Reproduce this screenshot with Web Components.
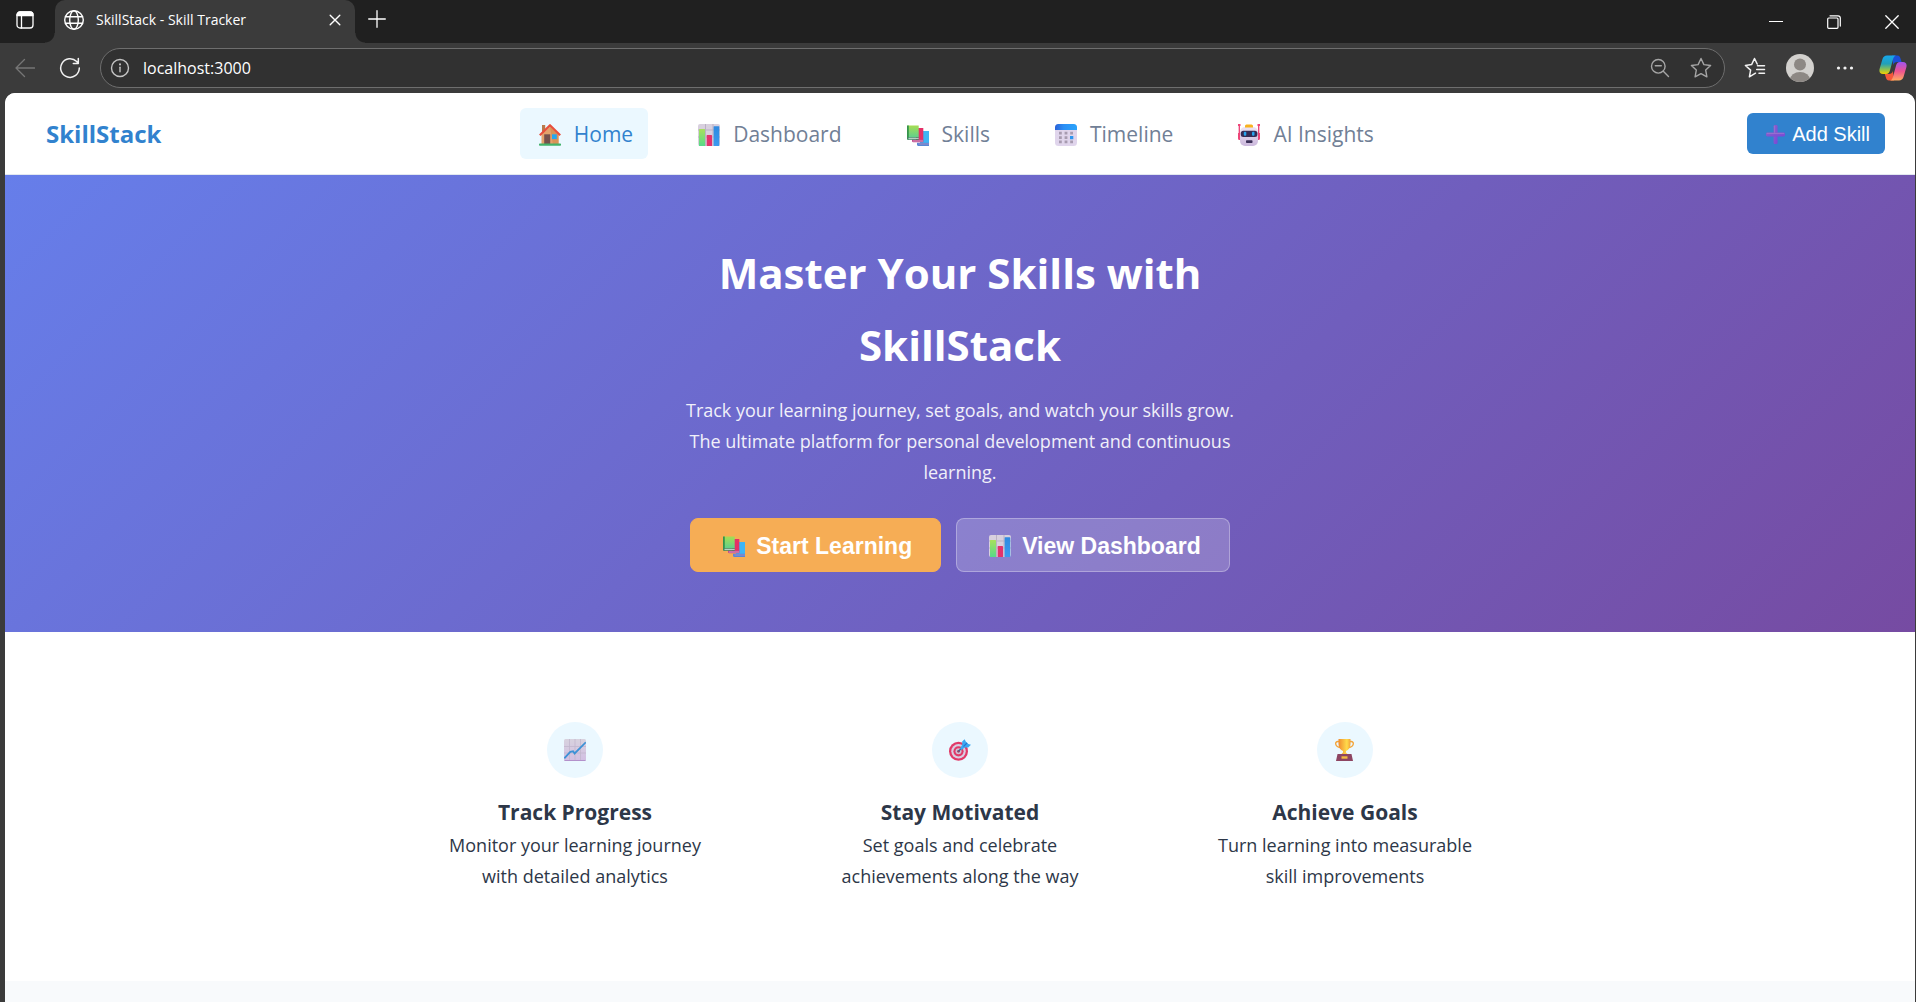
<!DOCTYPE html>
<html lang="en">
<head>
<meta charset="utf-8">
<title>SkillStack - Skill Tracker</title>
<style>
  body { margin: 0; background: #3b3b3b; font-family: "Open Sans", "Noto Sans", sans-serif; color: #2d3748; }
</style>
</head>
<body>
<browser-window>
  <skill-navbar></skill-navbar>
  <skill-hero>
    <span slot="title">Master Your Skills with SkillStack</span>
    <span slot="lead">Track your learning journey, set goals, and watch your skills grow. The ultimate platform for personal development and continuous learning.</span>
    <skill-button slot="actions" variant="warm" icon="books">Start Learning</skill-button>
    <skill-button slot="actions" variant="glass" icon="bars">View Dashboard</skill-button>
  </skill-hero>
  <feature-list>
    <feature-card icon="trend"><span slot="title">Track Progress</span>Monitor your learning journey with detailed analytics</feature-card>
    <feature-card icon="target"><span slot="title">Stay Motivated</span>Set goals and celebrate achievements along the way</feature-card>
    <feature-card icon="trophy"><span slot="title">Achieve Goals</span>Turn learning into measurable skill improvements</feature-card>
  </feature-list>
</browser-window>

<script>
const line = (w, h, body, sw = 1.4) =>
  `<svg width="${w}" height="${h}" viewBox="0 0 ${w} ${h}" fill="none" stroke="currentColor" stroke-width="${sw}" stroke-linecap="round" stroke-linejoin="round" aria-hidden="true">${body}</svg>`;
const art = (size, body) =>
  `<svg width="${size}" height="${size}" viewBox="0 0 22 22" aria-hidden="true">${body}</svg>`;

const ICONS = {
  tabs: () => line(20, 20, '<rect x="2" y="2" width="16" height="16" rx="3"/><path d="M2 5a3 3 0 0 1 3-3h10a3 3 0 0 1 3 3v.500H2z" fill="currentColor"/><path d="M6.500 6v12"/>', 1.3),
  globe: () => line(20, 20, '<circle cx="10" cy="10" r="9.300"/><ellipse cx="10" cy="10" rx="4.300" ry="9.300"/><path d="M1.500 6.700h17M1.500 13.300h17"/>'),
  close: () => line(12, 12, '<path d="M1.200 1.200l9.600 9.600M10.800 1.200l-9.600 9.600"/>', 1.4),
  plusThin: () => line(18, 18, '<path d="M9 .7v16.600M.7 9h16.600"/>', 1.3),
  min: () => line(14, 14, '<path d="M.5 6.500h13"/>', 1.2),
  restore: () => line(14, 14, '<rect x=".7" y="3" width="10.300" height="10.300" rx="1"/><path d="M3 .8h8a2.300 2.300 0 0 1 2.300 2.300v8"/>', 1.2),
  closeWin: () => line(14, 14, '<path d="M.8.800l12.400 12.400M13.200.800L.8 13.200"/>', 1.3),
  back: () => line(20, 20, '<path d="M19.500 10H1M9.500 1.500L1 10l8.500 8.500"/>', 1.3),
  refresh: () => line(22, 22, '<path d="M20.300 11a9.300 9.300 0 1 1-2.600-6.400l1.500 1.700M19.300 1.500v5h-5"/>', 1.5),
  info: () => line(20, 20, '<circle cx="10" cy="10" r="8.500"/><path d="M10 9.200v4.500"/><path d="M10 6.300v.1" stroke-width="2"/>'),
  zoomOut: () => line(20, 20, '<circle cx="8.300" cy="8.300" r="6.800"/><path d="M5.300 7.800h6M13.300 13.300l5.200 5.200"/>', 1.4),
  star: () => line(22, 22, '<path d="M11 1.500l2.900 6.100 6.700.9-4.900 4.600 1.200 6.700-5.900-3.200-5.900 3.200 1.200-6.700L1.400 8.500l6.700-.9z"/>', 1.4),
  favs: () => line(22, 22, '<path d="M11.500 16.200L5.400 19.800l1.200-6.700L1.400 8.500l6.200-.9L10.500 1.500l2.700 5.500M13.500 8.700h7M12.700 12.500h7.800M15 16.300h5.500"/>', 1.5),
  dots: () => '<svg width="18" height="6" viewBox="0 0 18 6" fill="currentColor" aria-hidden="true"><circle cx="2.500" cy="3" r="1.600"/><circle cx="9" cy="3" r="1.600"/><circle cx="15.500" cy="3" r="1.600"/></svg>',
  avatar: () => '<svg width="28" height="28" viewBox="0 0 28 28" aria-hidden="true"><defs><clipPath id="av"><circle cx="14" cy="14" r="14"/></clipPath></defs><circle cx="14" cy="14" r="14" fill="#d3d1ce"/><g clip-path="url(#av)" fill="#8d8884"><circle cx="14" cy="10.500" r="6"/><ellipse cx="14" cy="26" rx="10" ry="8"/></g></svg>',
  copilot: () => `<svg width="28" height="28" viewBox="0 0 28 28" aria-hidden="true"><defs>
    <linearGradient id="c1" x1="0" y1="0" x2="0" y2="1"><stop offset="0" stop-color="#16a8ee"/><stop offset=".45" stop-color="#22a0b8"/><stop offset=".75" stop-color="#8cc152"/><stop offset="1" stop-color="#f5d000"/></linearGradient>
    <linearGradient id="c2" x1="0" y1="0" x2="0" y2="1"><stop offset="0" stop-color="#a054f0"/><stop offset=".5" stop-color="#ee5390"/><stop offset="1" stop-color="#ffab60"/></linearGradient></defs>
    <path d="M13 1.500h5.500c1.800 0 2.600 1.500 3.100 3.200l1 3.300h-4.500c-2 0-3.200.7-3.900 3z" fill="#1b4fd8"/>
    <path d="M15 26.500H10c-2 0-2.700-1.500-3.200-3.200L5.800 20H10c2 0 3.200-.7 3.900-3z" fill="#f4583a"/>
    <path d="M8 1.500h9c-1.700.5-2.500 2-3 3.800l-3 11c-.6 2.300-1.700 3.700-4 3.700H4c-3 0-4.200-2.300-3.300-5.500L3.500 5C4.200 2.700 5.700 1.500 8 1.500z" fill="url(#c1)"/>
    <path d="M20 26.500h-9c1.700-.5 2.500-2 3-3.800l3-11c.6-2.300 1.700-3.700 4-3.700h3c3 0 4.200 2.300 3.300 5.500L24.500 23c-.7 2.300-2.200 3.500-4.500 3.500z" fill="url(#c2)"/></svg>`,

  plus: s => art(s, '<defs><linearGradient id="p" x1="0" x2="1" y1="0" y2="1"><stop offset="0" stop-color="#8a63c8"/><stop offset="1" stop-color="#7a45d8"/></linearGradient></defs><rect x="8.800" y="0" width="4.600" height="22" rx="1.500" fill="url(#p)"/><rect x="0" y="8.800" width="22" height="4.400" rx="1.500" fill="url(#p)"/><path d="M10 1v8M1 9.800h20" stroke="#a07ad0" stroke-width=".8"/>'),
  home: s => art(s, '<rect x="3" y="1" width="3.200" height="8" fill="#b97a4b"/><path d="M2.500 10.500L11 2.500l8.500 8V21h-17z" fill="#e3a26c"/><path d="M11 3l8.500 7.500V21H14z" fill="#d99357"/><rect x="5.200" y="10.300" width="6" height="10" fill="#75504c"/><rect x="13" y="10.300" width="4.800" height="4.800" fill="#25a7f0"/><path d="M.8 11.200L11 1.200l10.200 10" fill="none" stroke="#e84f3c" stroke-width="2.200" stroke-linejoin="round"/><rect x="0" y="19.600" width="22" height="2.200" rx=".8" fill="#43b36b"/>'),
  bars: s => art(s, '<defs><linearGradient id="g" x1="0" x2="0" y1="0" y2="1"><stop offset="0" stop-color="#a8e05c"/><stop offset="1" stop-color="#57d98a"/></linearGradient><linearGradient id="b" x1="0" x2="0" y1="0" y2="1"><stop offset="0" stop-color="#2f8ae0"/><stop offset="1" stop-color="#3b9af0"/></linearGradient></defs><rect width="22" height="22" rx="2" fill="#d8d0de"/><path d="M0 6h22M0 13h22M7.500 0v22M15 0v22" stroke="#bbb1c4" stroke-width="1"/><rect x="1" y="5" width="6" height="17" rx=".6" fill="url(#g)"/><rect x="8.700" y="11" width="5.300" height="11" rx=".6" fill="#e3326c"/><rect x="15.600" y="2.200" width="5.700" height="19.800" rx=".6" fill="url(#b)"/>'),
  books: s => art(s, '<defs><linearGradient id="k" x1="0" x2="0" y1="0" y2="1"><stop offset="0" stop-color="#a6dd52"/><stop offset="1" stop-color="#5fd08d"/></linearGradient></defs><path d="M13 7h9v13H13z" fill="#3fb5f4"/><path d="M10 18.800h12V22H11.500a1.500 1.500 0 0 1-1.500-1.500z" fill="#5787d6"/><path d="M11.500 20h10.500" stroke="#9d8bc4" stroke-width="1"/><path d="M9 4h7.300v12.500H9z" fill="#e52f67"/><path d="M5 15.500h11.300v2.800H6.300A1.500 1.500 0 0 1 5 17z" fill="#c04b8b"/><path d="M6 17h10" stroke="#dda6c8" stroke-width=".8"/><path d="M.4 1.500h11.300v12H.4z" fill="url(#k)"/><path d="M0 1.500h1.800v14H0z" fill="#35934c"/><path d="M.3 13.300h11.400v2.400H1A1 1 0 0 1 .3 15z" fill="#3e8564"/><path d="M1.500 14.400h10.200" stroke="#d6e2dc" stroke-width=".9"/>'),
  calendar: s => art(s, '<defs><linearGradient id="h" x1="0" x2="1" y1="0" y2="0"><stop offset="0" stop-color="#2b62d8"/><stop offset=".4" stop-color="#2b8ff5"/><stop offset="1" stop-color="#2aa4fb"/></linearGradient></defs><rect width="22" height="22" rx="3.500" fill="#e0d5ec"/><path d="M0 6V3.500A3.500 3.500 0 0 1 3.500 0h15A3.500 3.500 0 0 1 22 3.500V6z" fill="url(#h)"/><g fill="#a79bb0"><path d="M4 7.800h2.800v2.800H4zM9.600 7.800h2.800v2.800H9.600zM15.200 7.800H18v2.800h-2.800zM4 12.200h2.800V15H4zM9.600 12.200h2.800V15H9.600zM4 16.600h2.800v2.600H4zM9.600 16.600h2.800v2.600H9.600zM15.200 16.600H18v2.600h-2.800z"/></g><path d="M15 12h3.300v3.200H15z" fill="#2c95ef"/>'),
  robot: s => art(s, '<defs><linearGradient id="r" x1="0" x2="0" y1="0" y2="1"><stop offset="0" stop-color="#eee4f4"/><stop offset="1" stop-color="#cbb8dc"/></linearGradient></defs><path d="M1.300 1v14M20.700 1v14" stroke="#ea3d74" stroke-width="1.300"/><path d="M0 0h2.500v2H0zM19.500 0H22v2h-2.500zM0 9h3v7H1.500A1.500 1.500 0 0 1 0 14.500zM19 9h3v5.500a1.500 1.500 0 0 1-1.500 1.500H19z" fill="#ee4578"/><rect x="2" y="3" width="18" height="19" rx="5" fill="url(#r)"/><path d="M7 2a1.500 1.500 0 0 1 1.500-1.500h5A1.500 1.500 0 0 1 15 2v1.500H7z" fill="#f8b21f"/><rect x="2.800" y="6.700" width="16.600" height="6.300" rx="2.500" fill="#352c55"/><rect x="5.800" y="7.800" width="2.500" height="4" rx="1" fill="#26a4ee"/><rect x="14" y="7.800" width="2.500" height="4" rx="1" fill="#26a4ee"/><rect x="8" y="16.300" width="6.500" height="2.700" rx=".8" fill="#3b3058"/>'),
  trend: s => art(s, '<defs><linearGradient id="t" x1="0" x2="0" y1="0" y2="1"><stop offset="0" stop-color="#d8d2de"/><stop offset="1" stop-color="#d2bfe3"/></linearGradient></defs><rect width="22" height="22" rx="1.500" fill="url(#t)"/><path d="M0 7.500h22M0 14h22M5.500 0v22M11 0v22M16.500 0v22" stroke="#c2b6cd" stroke-width=".8"/><path d="M.5 21.500h21" stroke="#b391cb"/><path d="M.3 19.300l6-6.500 2.800-.5 1.500 2.200L21.800 3.300" fill="none" stroke="#3d92d6" stroke-width="1.800"/>'),
  target: s => art(s, '<circle cx="9.500" cy="12.300" r="9.500" fill="#e13a68"/><circle cx="9.500" cy="12.300" r="7.200" fill="#d9cfe2"/><circle cx="9.500" cy="12.300" r="5.100" fill="#e13a68"/><circle cx="9.500" cy="12.300" r="3" fill="#d0bfd4"/><circle cx="9.500" cy="12.300" r="1.400" fill="#9c4667"/><path d="M9.500 12.300l3-3" stroke="#42668f" stroke-width="1.400"/><path d="M11 9.500l2.200-3.700V2.600L15.600.2l1.300 2.600 1.300.9 1.100 1.200 2.700.9-2.800 2.700h-3.400L12.500 11z" fill="#3aa8f2"/><path d="M14.500 7.500L18 4" stroke="#2677d2" stroke-width="1.100"/>'),
  trophy: s => art(s, '<defs><linearGradient id="y" x1="0" x2="1" y1="0" y2="0"><stop offset="0" stop-color="#f08b2f"/><stop offset=".7" stop-color="#ffdc4b"/><stop offset="1" stop-color="#f3a238"/></linearGradient></defs><path d="M5.500 2.500H3.800A2.100 2.100 0 0 0 1.700 5c.3 2 2 3.200 4.800 3.500M15.500 2.500h1.700A2.100 2.100 0 0 1 19.300 5c-.3 2-2 3.200-4.800 3.500" fill="none" stroke="#f3a53a" stroke-width="1.400"/><path d="M4.500 0h12v5c0 3.800-2 6-4.500 7v1.500l2.500 2.500h-8L9 13.500V12c-2.500-1-4.500-3.200-4.500-7z" fill="url(#y)"/><path d="M3.500 15h14l1.500 7H2z" fill="#8d4562"/><rect x="7.500" y="17.300" width="6" height="2.400" fill="#f4bb3f"/>')
};

/* Base class: clones the class's markup into an open shadow root. */
class Base extends HTMLElement {
  connectedCallback() {
    if (this.shadowRoot) return;
    const t = document.createElement('template');
    t.innerHTML = `<style>*{box-sizing:border-box}${this.css()}</style>${this.html()}`;
    this.attachShadow({ mode: 'open' }).append(t.content.cloneNode(true));
  }
}

customElements.define('ui-icon', class extends Base {
  css() { return ':host{display:inline-flex;align-items:center;justify-content:center;flex:none}svg{display:block}'; }
  html() { return ICONS[this.getAttribute('name')](this.getAttribute('size') || 22); }
});

customElements.define('browser-tabs', class extends Base {
  css() { return `
    :host{display:flex;height:43px;background:#202020;color:#fff}
    button{border:0;background:none;color:inherit;padding:0;display:flex;align-items:center;justify-content:center}
    .menu{width:50px;padding-bottom:3px}
    .tab{width:300px;margin:0 4px 0 5px;display:flex;align-items:center;gap:12px;padding:0 14px 3px 9px;background:#3b3b3b;border-radius:10px 10px 0 0;position:relative;font-size:14px;line-height:20px}
    .tab::before,.tab::after{content:"";position:absolute;bottom:0;width:10px;height:10px}
    .tab::before{left:-10px;background:radial-gradient(circle at 0 0,#202020 9px,#3b3b3b 10px)}
    .tab::after{right:-10px;background:radial-gradient(circle at 100% 0,#202020 9px,#3b3b3b 10px)}
    .title{flex:1}
    .new{width:36px;padding-bottom:5px}
    .win{margin-left:auto;display:flex;gap:44px;padding-right:17px}`; }
  html() { return `
    <button class="menu" aria-label="Tab actions"><ui-icon name="tabs"></ui-icon></button>
    <div class="tab"><ui-icon name="globe"></ui-icon><span class="title">SkillStack - Skill Tracker</span><button aria-label="Close tab"><ui-icon name="close"></ui-icon></button></div>
    <button class="new" aria-label="New tab"><ui-icon name="plusThin"></ui-icon></button>
    <div class="win"><button aria-label="Minimize"><ui-icon name="min"></ui-icon></button><button aria-label="Restore"><ui-icon name="restore"></ui-icon></button><button aria-label="Close"><ui-icon name="closeWin"></ui-icon></button></div>`; }
});

customElements.define('browser-toolbar', class extends Base {
  css() { return `
    :host{display:flex;align-items:center;height:50px;background:#3b3b3b;color:#f2f2f2;padding:0 9px 0 15px}
    button{border:0;background:none;color:inherit;padding:0;display:flex;align-items:center;justify-content:center}
    .back{color:#767676;margin-right:24px}
    .bar{flex:1;display:flex;align-items:center;height:40px;margin-left:19px;padding:0 12px 0 9px;border:1px solid #6e6e6e;border-radius:20px;background:#313131;color:#a5a5a5}
    .info{color:#c4c4c4}
    input{flex:1;min-width:0;border:0;padding:0;margin:0 0 0 13px;background:none;color:#fff;font:16px/24px "Open Sans","Noto Sans",sans-serif;outline:0}
    .tools{display:flex;align-items:center;margin-left:19px}
    .zoom{margin-right:20px}.avatar{margin-left:20px}.dots{margin:0 25px 0 22px}`; }
  html() { return `
    <button class="back" aria-label="Back"><ui-icon name="back"></ui-icon></button>
    <button aria-label="Refresh"><ui-icon name="refresh"></ui-icon></button>
    <div class="bar"><ui-icon class="info" name="info"></ui-icon><input type="text" aria-label="Address" value="localhost:3000">
      <button class="zoom" aria-label="Zoom"><ui-icon name="zoomOut"></ui-icon></button><button aria-label="Add to favorites"><ui-icon name="star"></ui-icon></button></div>
    <div class="tools"><button aria-label="Favorites"><ui-icon name="favs"></ui-icon></button><button class="avatar" aria-label="Profile"><ui-icon name="avatar"></ui-icon></button><button class="dots" aria-label="More"><ui-icon name="dots"></ui-icon></button><button aria-label="Copilot"><ui-icon name="copilot"></ui-icon></button></div>`; }
});

customElements.define('browser-window', class extends Base {
  css() { return `
    :host{display:flex;flex-direction:column;min-height:100vh}
    main{flex:1;margin:0 1px 0 5px;background:#f8fafc;border-radius:10px 10px 0 0;overflow:hidden}`; }
  html() { return '<browser-tabs></browser-tabs><browser-toolbar></browser-toolbar><main><slot></slot></main>'; }
});

customElements.define('nav-link', class extends Base {
  css() { return `
    :host{display:block}
    a{display:flex;align-items:center;gap:9px;padding:9px 15px 7px;border-radius:6px;color:#718096;text-decoration:none;font-size:21px;line-height:35px}
    ui-icon{width:30px}
    :host([active]) a{background:#ebf8ff;color:#3182ce}`; }
  html() { return `<a href="#"><ui-icon name="${this.getAttribute('icon')}"></ui-icon><slot></slot></a>`; }
});

customElements.define('skill-button', class extends Base {
  css() { return `
    :host{display:block}
    button{display:flex;align-items:center;border:1px solid transparent;color:#fff;font-family:"Liberation Sans",Arial,sans-serif}
    ui-icon{width:30px}
    .primary{background:#3182ce;border-radius:6px;padding:8px 14px 6px 12px;gap:2px;font-size:20px;line-height:25px}
    .warm,.glass{border-radius:8px;padding:13px 28px 11px;gap:7px;font-size:23px;line-height:28px;font-weight:700}
    .warm{background:#f6ad55;border-color:#f6ad55}
    .glass{background:rgba(255,255,255,.2);border-color:rgba(255,255,255,.3)}`; }
  html() { const v = this.getAttribute('variant');
    return `<button type="button" class="${v}"><ui-icon name="${this.getAttribute('icon')}" size="${v === 'primary' ? 19 : 22}"></ui-icon><slot></slot></button>`; }
});

customElements.define('skill-navbar', class extends Base {
  css() { return `
    :host{display:flex;align-items:center;justify-content:space-between;padding:15px 30px 15px 41px;background:#fff;border-bottom:1px solid #e2e8f0}
    .logo{font-size:24px;line-height:36px;font-weight:700;color:#3182ce;text-decoration:none}
    nav{display:flex;gap:31px}`; }
  html() { return `
    <a class="logo" href="#">SkillStack</a>
    <nav><nav-link icon="home" active>Home</nav-link><nav-link icon="bars">Dashboard</nav-link><nav-link icon="books">Skills</nav-link><nav-link icon="calendar">Timeline</nav-link><nav-link icon="robot">AI Insights</nav-link></nav>
    <skill-button variant="primary" icon="plus">Add Skill</skill-button>`; }
});

customElements.define('skill-hero', class extends Base {
  css() { return `
    :host{display:flex;flex-direction:column;align-items:center;padding:62px 20px 60px;background:linear-gradient(135deg,#667eea 0%,#764ba2 100%);color:#fff;text-align:center}
    h1{margin:0 0 14px;max-width:576px;font-size:42px;line-height:72px;font-weight:700}
    p{margin:0 0 30px;max-width:576px;font-size:18px;line-height:31px;opacity:.9}
    .actions{display:flex;gap:15px}`; }
  html() { return '<h1><slot name="title"></slot></h1><p><slot name="lead"></slot></p><div class="actions"><slot name="actions"></slot></div>'; }
});

customElements.define('feature-list', class extends Base {
  css() { return `
    :host{display:block;background:#fff;padding:77px 20px 76px}
    .grid{display:grid;grid-template-columns:repeat(3,1fr);gap:38px;max-width:1117px;margin:0 auto}`; }
  html() { return '<section class="grid"><slot></slot></section>'; }
});

customElements.define('feature-card', class extends Base {
  css() { return `
    :host{display:flex;flex-direction:column;align-items:center;text-align:center;padding:13px 38px}
    .disc{display:flex;align-items:center;justify-content:center;width:56px;height:56px;border-radius:50%;background:#ebf8ff;margin-bottom:16px}
    h3{margin:0;font-size:21px;line-height:36px;font-weight:700}
    p{margin:0;font-size:18px;line-height:31px}`; }
  html() { return `<div class="disc"><ui-icon name="${this.getAttribute('icon')}"></ui-icon></div><h3><slot name="title"></slot></h3><p><slot></slot></p>`; }
});
</script>
</body>
</html>
